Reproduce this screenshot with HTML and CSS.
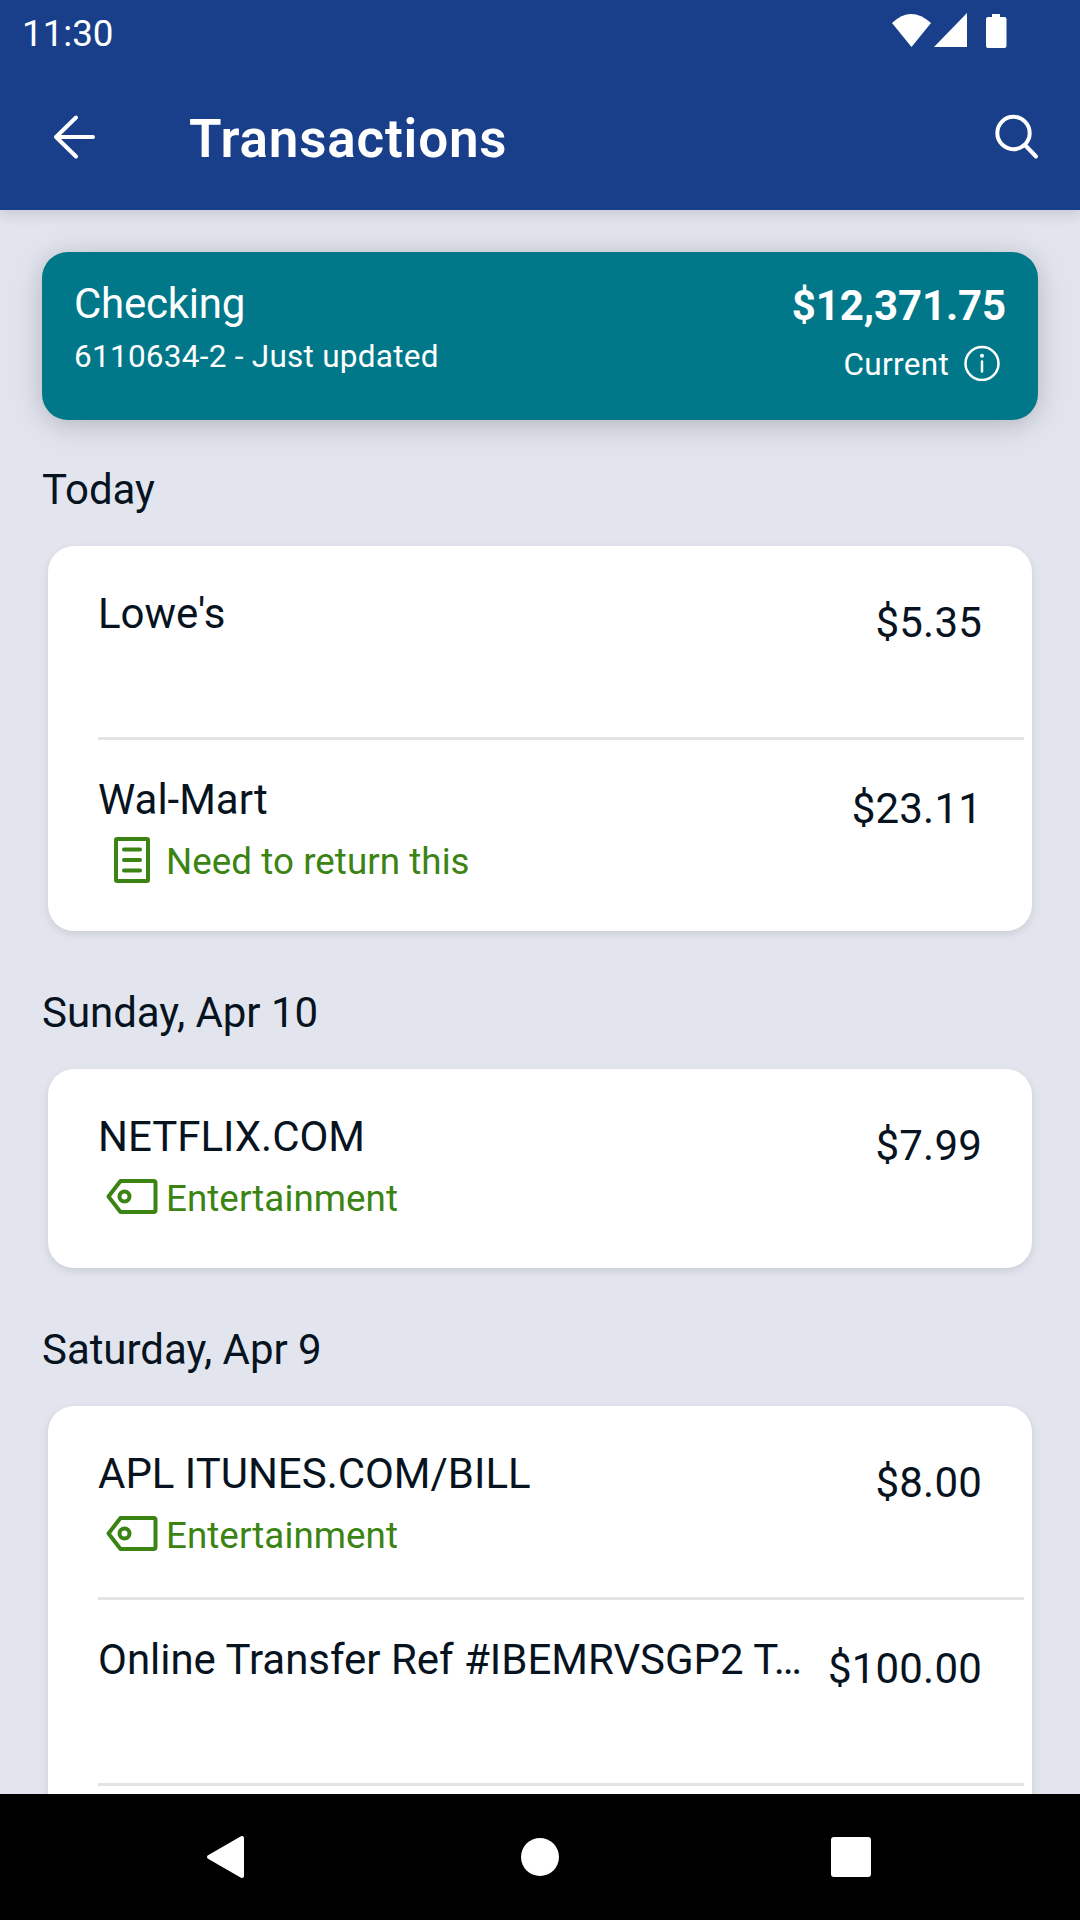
FILE: index.html
```html
<!doctype html>
<html lang="en">
<head>
    <meta charset="utf-8">
    <title>Transactions</title>
    <link rel="stylesheet" href="styles.css">
</head>
<body>

    <div class="header">
        <div class="status">
            <span class="time">11:30</span>
            <svg class="status-icons" width="116" height="36" viewBox="0 0 116 36">
                <path d="M1 11 Q20 -7 40 11 L20.5 35 Z"/>
                <path d="M43 35 L76 1 V35 Z"/>
                <path d="M101 2 h8 v3 h4.500 q2 0 2 2 v27 q0 2 -2 2 h-16.500 q-2 0 -2 -2 v-27 q0 -2 2 -2 h4 z"/>
            </svg>
        </div>
        <div class="appbar">
            <svg class="back" width="44" height="46" viewBox="0 0 44 46">
                <path d="M24 3.500 L4 23 L24 42.500 M4 23 H41"/>
            </svg>
            <h1>Transactions</h1>
            <svg class="search" width="46" height="46" viewBox="0 0 46 46">
                <circle cx="19.500" cy="19" r="16.200"/>
                <path d="M31 31 L42 42.500"/>
            </svg>
        </div>
    </div>

    <div class="content">
        <div class="account">
            <div class="account-left">
                <div class="account-name">Checking</div>
                <div class="account-info">6110634-2 - Just updated</div>
            </div>
            <div class="account-right">
                <div class="balance">$12,371.75</div>
                <div class="current">
                    <span>Current</span>
                    <svg width="36" height="36" viewBox="0 0 36 36">
                        <circle class="ring" cx="18" cy="18.500" r="16.500"/>
                        <circle class="dot" cx="18" cy="10.700" r="2"/>
                        <path class="ring" d="M18 16.500 V26.500"/>
                    </svg>
                </div>
            </div>
        </div>

        <h2>Today</h2>
        <ul class="card">
            <li>
                <div class="detail">
                    <div class="name">Lowe's</div>
                </div>
                <div class="amount">$5.35</div>
            </li>
            <li>
                <div class="detail">
                    <div class="name">Wal-Mart</div>
                    <div class="note">
                        <svg width="56" height="48" viewBox="0 0 56 48">
                            <rect x="10" y="3" width="32" height="42" rx="1"/>
                            <path d="M18 13.500 H34 M18 24 H34 M18 34.500 H34"/>
                        </svg>
                        <span>Need to return this</span>
                    </div>
                </div>
                <div class="amount">$23.11</div>
            </li>
        </ul>

        <h2>Sunday, Apr 10</h2>
        <ul class="card">
            <li>
                <div class="detail">
                    <div class="name">NETFLIX.COM</div>
                    <div class="note">
                        <svg width="56" height="48" viewBox="0 0 56 48">
                            <path d="M14.500 8 H47.500 Q49.500 8 49.500 10 V37 Q49.500 39 47.500 39 H14.500 L2.500 23.500 Z"/>
                            <circle cx="18.500" cy="23.500" r="5"/>
                        </svg>
                        <span>Entertainment</span>
                    </div>
                </div>
                <div class="amount">$7.99</div>
            </li>
        </ul>

        <h2>Saturday, Apr 9</h2>
        <ul class="card">
            <li>
                <div class="detail">
                    <div class="name">APL ITUNES.COM/BILL</div>
                    <div class="note">
                        <svg width="56" height="48" viewBox="0 0 56 48">
                            <path d="M14.500 8 H47.500 Q49.500 8 49.500 10 V37 Q49.500 39 47.500 39 H14.500 L2.500 23.500 Z"/>
                            <circle cx="18.500" cy="23.500" r="5"/>
                        </svg>
                        <span>Entertainment</span>
                    </div>
                </div>
                <div class="amount">$8.00</div>
            </li>
            <li>
                <div class="detail">
                    <div class="name">Online Transfer Ref #IBEMRVSGP2 T…</div>
                </div>
                <div class="amount">$100.00</div>
            </li>
            <li></li>
        </ul>
    </div>

    <div class="navbar">
        <svg width="44" height="44" viewBox="0 0 44 44">
            <path d="M5 22 L38 3 V41 Z" stroke="#fff" stroke-width="4" stroke-linejoin="round"/>
        </svg>
        <svg width="44" height="44" viewBox="0 0 44 44">
            <circle cx="22" cy="22" r="19"/>
        </svg>
        <svg width="44" height="44" viewBox="0 0 44 44">
            <rect x="2" y="2" width="40" height="40" rx="3"/>
        </svg>
    </div>

</body>
</html>
```

FILE: styles.css
```css
body, h1, h2, ul, li {
    margin: 0;
    padding: 0;
    list-style: none;
    font-weight: normal;
}

body {
    width: 1080px;
    height: 1920px;
    overflow: hidden;
    display: flex;
    flex-direction: column;
    background: #e2e5ee;
    color: #07131f;
    font-family: Roboto, "Liberation Sans", sans-serif;
    font-size: 42px;
    line-height: 50px;
}

svg {
    display: block;
    flex: none;
}

/* top bar */
.header {
    flex: none;
    height: 210px;
    background: #193f8b;
    color: #fff;
    position: relative;
    z-index: 1;
    box-shadow: 0 3px 14px rgba(0, 0, 0, 0.14);
}

.status {
    height: 63px;
    box-sizing: border-box;
    padding: 12px 73px 0 22px;
    display: flex;
    justify-content: space-between;
}

.time {
    font-size: 36.75px;
    line-height: 43px;
}

.status-icons {
    fill: #fff;
}

.appbar {
    height: 147px;
    padding: 0 40px 0 52px;
    display: flex;
    align-items: center;
}

.back, .search {
    fill: none;
    stroke: #fff;
    stroke-width: 4;
    stroke-linecap: round;
    stroke-linejoin: round;
}

h1 {
    flex: 1;
    margin-left: 93px;
    padding-top: 4px;
    font-size: 53px;
    line-height: 60px;
    font-weight: 600;
    letter-spacing: 0.8px;
}

/* list */
.content {
    flex: 1;
    min-height: 0;
    overflow: hidden;
    padding: 42px 42px 0;
}

.account {
    height: 168px;
    box-sizing: border-box;
    margin-bottom: 45px;
    padding: 27px 32px 0;
    display: flex;
    justify-content: space-between;
    border-radius: 26px;
    background: #007889;
    color: #fff;
    box-shadow: 0 6px 44px rgba(0, 0, 0, 0.1), 0 4px 20px rgba(0, 0, 0, 0.12);
}

.account-name {
    letter-spacing: -0.25px;
}

.account-info {
    margin-top: 9px;
    font-size: 31.5px;
    line-height: 38px;
    letter-spacing: 0.26px;
}

.account-right {
    padding-top: 2px;
    text-align: right;
}

.balance {
    font-weight: bold;
    letter-spacing: -0.1px;
}

.current {
    margin-top: 14px;
    padding-right: 6px;
    display: flex;
    justify-content: flex-end;
    gap: 15px;
    font-size: 31.5px;
    line-height: 38px;
    letter-spacing: 0.3px;
}

.current span {
    padding-top: 1px;
}

.ring {
    fill: none;
    stroke: #fff;
    stroke-width: 2.5;
    stroke-linecap: round;
}

.dot {
    fill: #fff;
}

h2 {
    margin-bottom: 31px;
    font-size: 42px;
    line-height: 50px;
    letter-spacing: -0.05px;
}

.card {
    margin: 0 6px 57px;
    padding: 8px 8px 5px 50px;
    border-radius: 26px;
    background: #fff;
    box-shadow: 0 3px 8px rgba(0, 0, 0, 0.1);
}

.card li {
    height: 186px;
    box-sizing: border-box;
    padding: 35px 42px 0 0;
    display: flex;
    justify-content: space-between;
    border-bottom: 3px solid #e4e4e4;
}

.card li:last-child {
    border-bottom: none;
}

.name {
    white-space: nowrap;
    letter-spacing: -0.02px;
}

.note {
    margin-top: 13px;
    padding-left: 8px;
    display: flex;
    gap: 4px;
    font-size: 36.75px;
    line-height: 48px;
    letter-spacing: 0.05px;
    color: #3b8413;
}

.note svg {
    margin-top: -2px;
    fill: none;
    stroke: #3b8413;
    stroke-width: 4;
    stroke-linecap: round;
    stroke-linejoin: round;
}

.amount {
    padding-top: 9px;
    letter-spacing: 0.2px;
}

/* system buttons */
.navbar {
    flex: none;
    height: 126px;
    padding: 0 207px 0 204px;
    display: flex;
    justify-content: space-between;
    align-items: center;
    background: #000;
}

.navbar svg {
    fill: #fff;
}

.navbar svg:nth-child(2) {
    margin-left: 3px;
}
```
